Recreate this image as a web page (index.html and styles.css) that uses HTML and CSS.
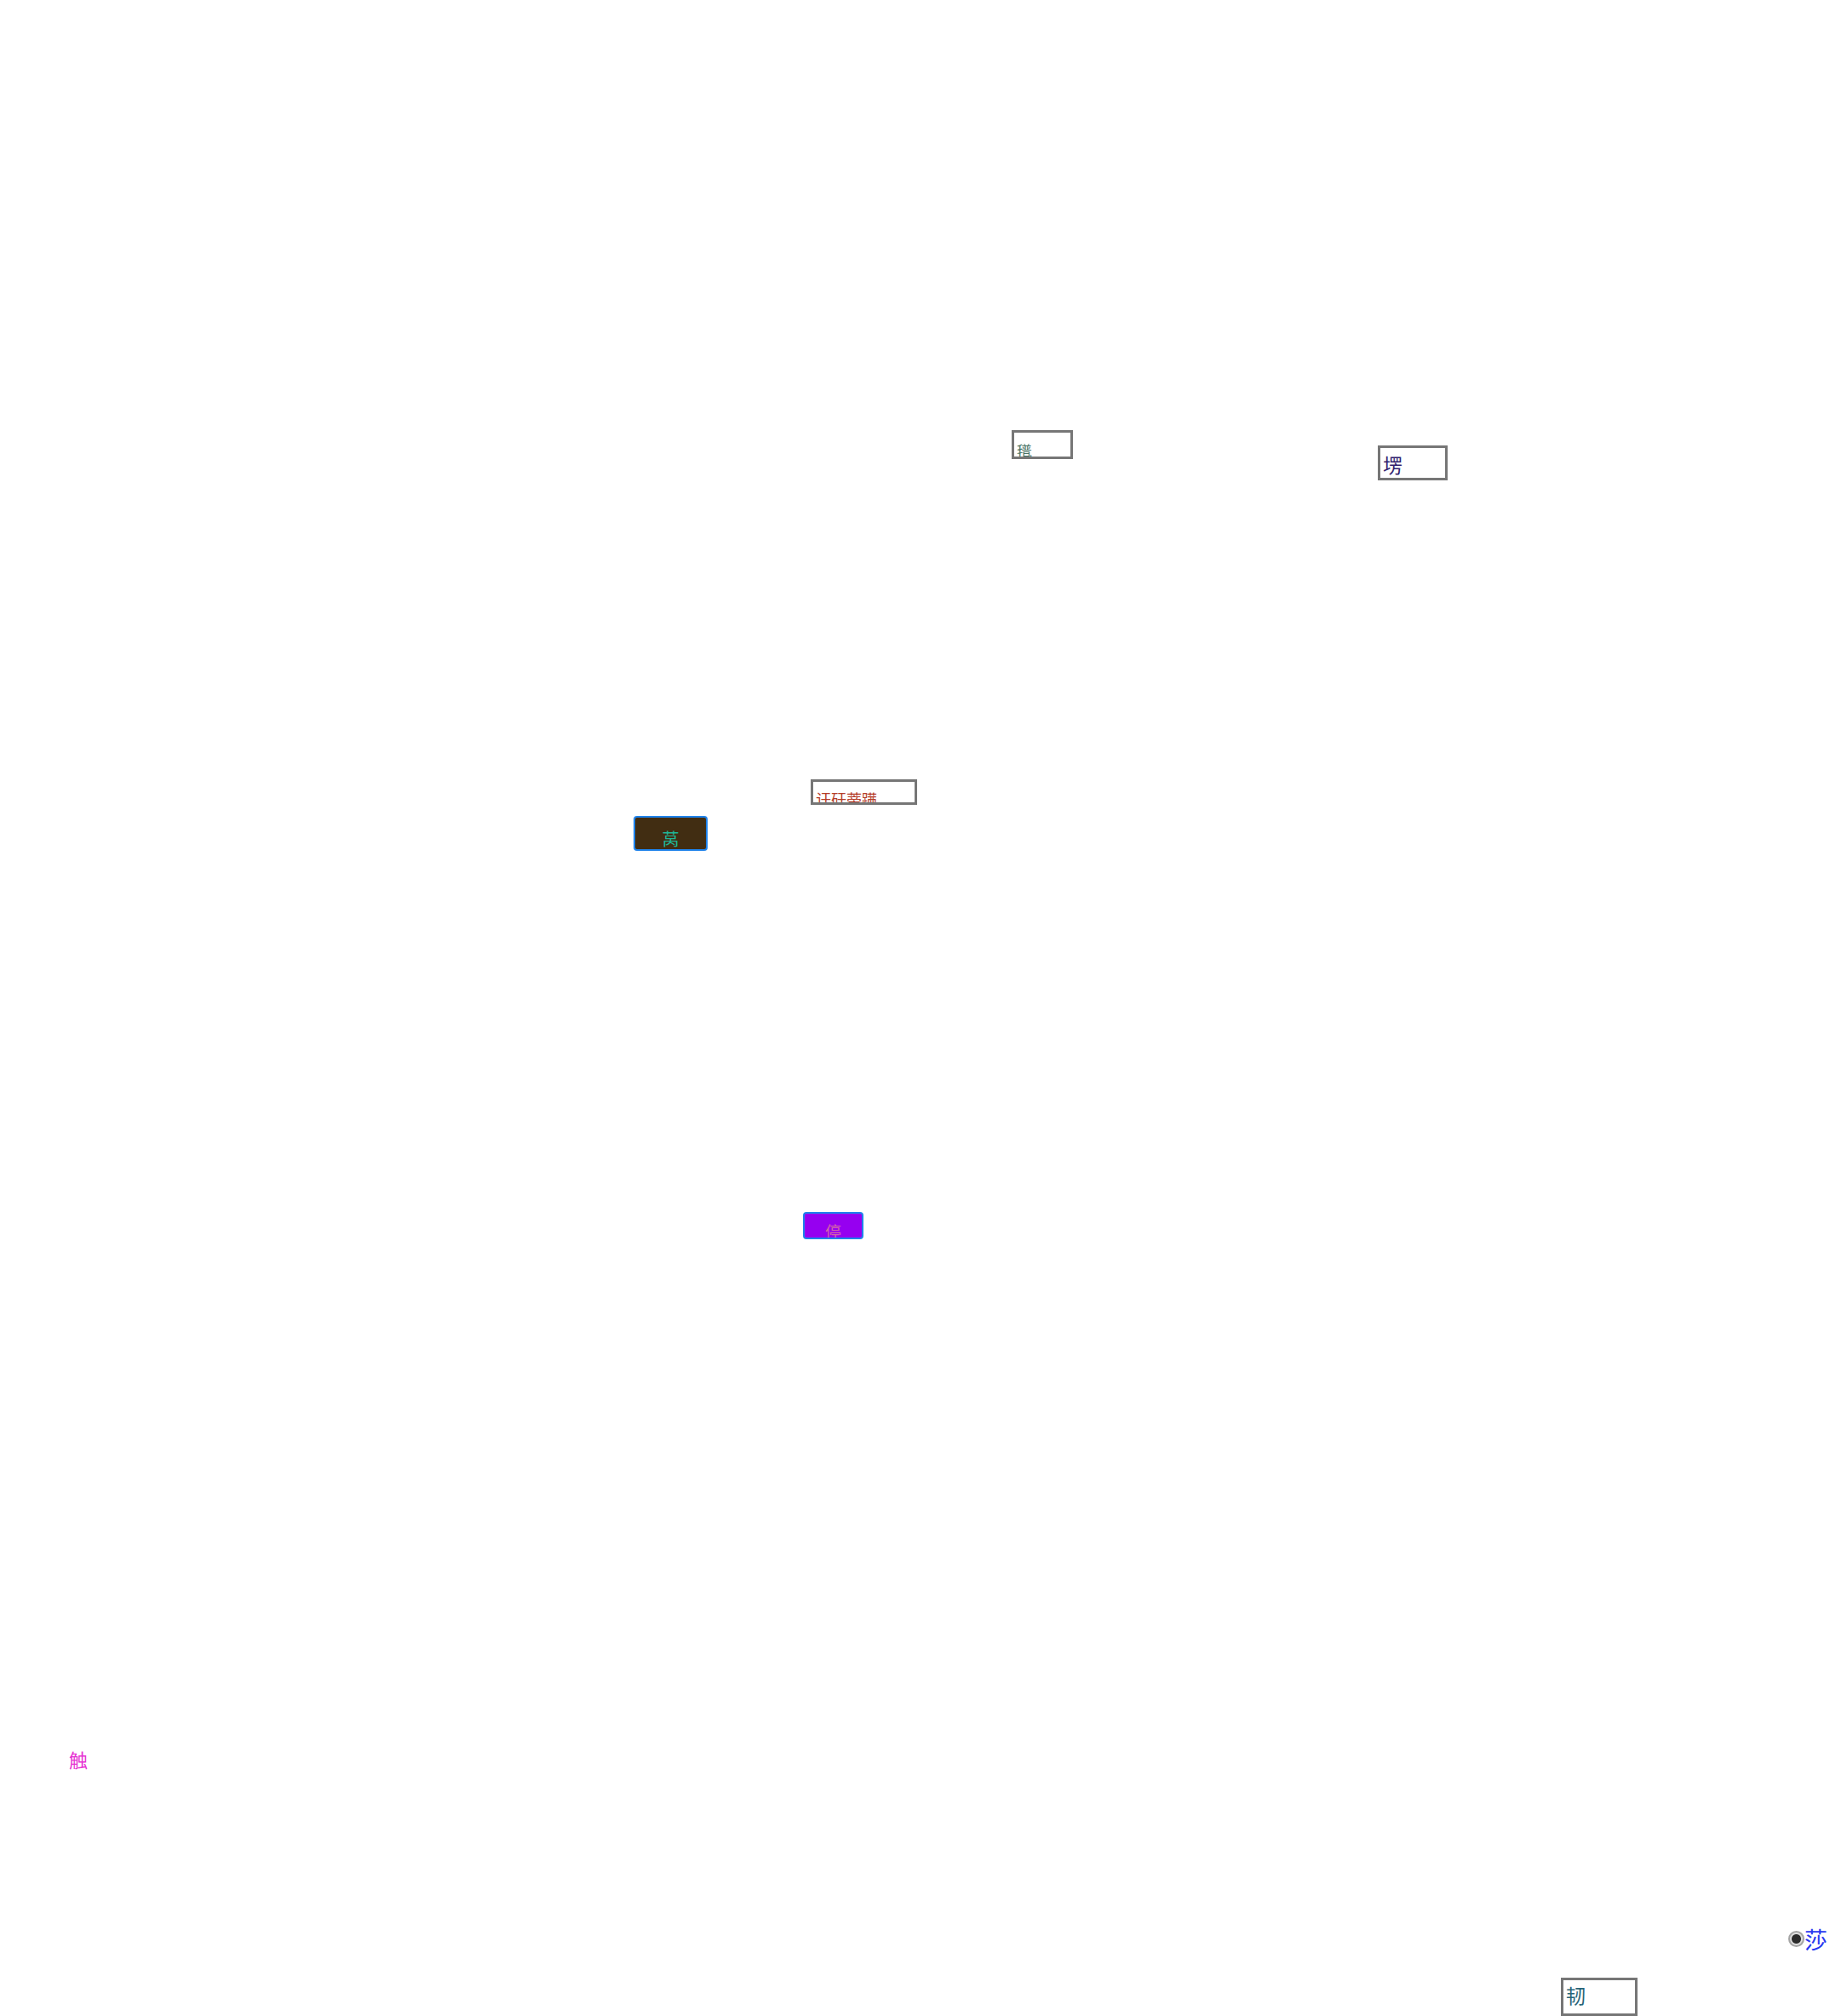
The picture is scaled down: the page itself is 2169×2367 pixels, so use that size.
FILE: index.html
```html
<!DOCTYPE html>
<html lang="zh-CN">
<head>
<meta charset="utf-8">
<title>画布</title>
<link rel="stylesheet" href="styles.css">
</head>
<body>
<main class="canvas">
<input class="field field-a" type="text" value="氆" aria-label="氆">
<input class="field field-b" type="text" value="塄" aria-label="塄">
<input class="field field-c" type="text" value="讦矸蒡蹒" aria-label="讦矸蒡蹒">
<button class="button button-a" type="button">莴</button>
<button class="button button-b" type="button">停</button>
<span class="label">触</span>
<label class="option"><input class="radio" type="radio" name="option" checked>莎</label>
<input class="field field-d" type="text" value="韧" aria-label="韧">
</main>
</body>
</html>
```
FILE: styles.css
```css
body {
  margin: 0;
  background: #fff;
  font-family: "Noto Sans CJK SC", sans-serif;
}

.canvas {
  position: relative;
  min-height: 100vh;
}

.field,
.button,
.label,
.option {
  position: absolute;
  box-sizing: border-box;
  font-family: inherit;
}

.field {
  border: 3px solid #767676;
  background: #fff;
  padding: 0 3px;
}

.field-a {
  left: 1188px;
  top: 505px;
  width: 72px;
  height: 34px;
  padding: 15px 3px 1px;
  font-size: 18px;
  line-height: 18px;
  color: #4a7466;
}

.field-b {
  left: 1618px;
  top: 523px;
  width: 82px;
  height: 41px;
  padding-top: 2px;
  font-size: 23px;
  color: #321e6e;
}

.field-c {
  left: 952px;
  top: 915px;
  width: 125px;
  height: 30px;
  padding: 16px 3px 1px;
  font-size: 18px;
  line-height: 18px;
  color: #b43c28;
}

.field-d {
  left: 1833px;
  top: 2322px;
  width: 90px;
  height: 45px;
  padding-bottom: 6px;
  font-size: 23px;
  color: #286478;
}

.button {
  border: 2px solid #1e82eb;
  border-radius: 4px;
  padding: 0;
  overflow: hidden;
}

.button-a {
  left: 744px;
  top: 958px;
  width: 87px;
  height: 41px;
  padding-top: 12px;
  background: #412d12;
  font-size: 20px;
  line-height: 20px;
  color: #1eb496;
}

.button-b {
  left: 943px;
  top: 1423px;
  width: 71px;
  height: 32px;
  padding-top: 11px;
  background: #9600f0;
  font-size: 19px;
  line-height: 19px;
  color: #d264aa;
}

.label {
  left: 81px;
  top: 2054px;
  font-size: 22px;
  line-height: 22px;
  color: #e632d2;
}

.option {
  left: 2100px;
  top: 2263px;
  display: flex;
  align-items: center;
  font-size: 27px;
  line-height: 27px;
  color: #2837f0;
}

.radio {
  appearance: none;
  width: 19px;
  height: 19px;
  margin: 0;
  border: 2px solid #a4a4a4;
  border-radius: 50%;
  background: radial-gradient(circle, #2b2b2b 5px, #dedede 6px);
}
```
